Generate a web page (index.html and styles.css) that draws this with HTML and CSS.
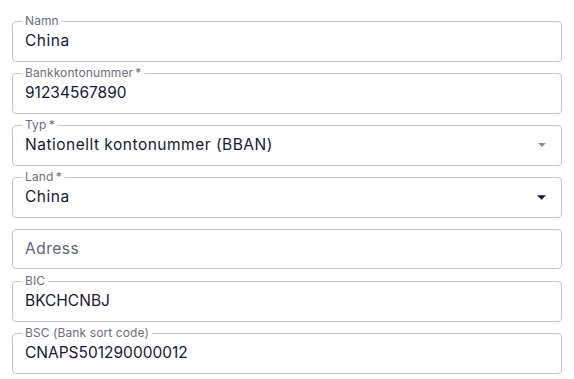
FILE: index.html
```html
<!DOCTYPE html>
<html lang="sv">
<head>
<meta charset="utf-8">
<title>Konto</title>
<link rel="stylesheet" href="styles.css">
</head>
<body>
<form class="form">
  <fieldset class="field">
    <legend class="label">Namn</legend>
    <div class="value">China</div>
  </fieldset>
  <fieldset class="field">
    <legend class="label">Bankkontonummer&thinsp;*</legend>
    <div class="value code">91234567890</div>
  </fieldset>
  <fieldset class="field">
    <legend class="label">Typ&thinsp;*</legend>
    <div class="value select">
      <span>Nationellt kontonummer (BBAN)</span>
      <svg class="arrow arrow-muted" viewBox="0 0 10 5"><path d="M0 0h10L5 5z"/></svg>
    </div>
  </fieldset>
  <fieldset class="field">
    <legend class="label">Land&thinsp;*</legend>
    <div class="value select">
      <span>China</span>
      <svg class="arrow arrow-dark" viewBox="0 0 10 5"><path d="M0 0h10L5 5z"/></svg>
    </div>
  </fieldset>
  <fieldset class="field field-plain">
    <div class="value placeholder">Adress</div>
  </fieldset>
  <fieldset class="field">
    <legend class="label">BIC</legend>
    <div class="value code">BKCHCNBJ</div>
  </fieldset>
  <fieldset class="field">
    <legend class="label">BSC (Bank sort code)</legend>
    <div class="value code">CNAPS501290000012</div>
  </fieldset>
</form>
</body>
</html>
```
FILE: styles.css
```css
html, body {
  margin: 0;
  padding: 0;
  background: #ffffff;
}
body {
  font-family: Inter, "Noto Sans", sans-serif;
  color: #16163a;
}
.form {
  display: flex;
  flex-direction: column;
  gap: 5px;
  padding: 15px 12px 0 12px;
}
.field {
  margin: 0;
  padding: 0 12px;
  border: 1px solid #c6c6c9;
  border-radius: 4px;
  min-width: 0;
}
.field-plain {
  margin-top: 6px;
  margin-bottom: 1px;
}
.label {
  font-size: 12px;
  line-height: 12px;
  letter-spacing: 0.1px;
  color: #6c6c7c;
  padding: 0 3px;
  margin-left: -3px;
}
.value {
  height: 40px;
  margin-top: -6px;
  display: flex;
  align-items: center;
  font-size: 15.5px;
  line-height: 20px;
  letter-spacing: 0.5px;
  white-space: nowrap;
}
.code {
  letter-spacing: 0;
}
.field-plain .value {
  margin-top: 0;
  height: 38px;
}
.select {
  justify-content: space-between;
  padding-right: 3px;
}
.placeholder {
  color: #5e6180;
}
.arrow {
  display: block;
}
.arrow-muted {
  fill: #8a8a96;
  width: 8px;
  height: 4px;
}
.arrow-dark {
  fill: #14145a;
  width: 9px;
  height: 5px;
}
```
